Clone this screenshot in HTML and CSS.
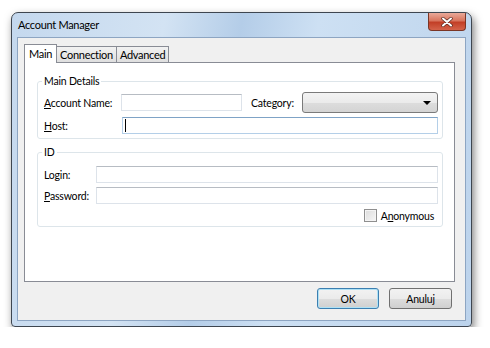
FILE: index.html
```html
<!DOCTYPE html>
<html lang="en">
<head>
  <meta charset="UTF-8">
  <title>Account Manager</title>
  <link rel="stylesheet" href="styles.css">
</head>
<body>

  <div class="window">
    <div class="titlebar">
      <span class="title">Account Manager</span>
      <button class="close-btn" aria-label="Close">
        <svg width="12" height="10" viewBox="0 0 12 10">
          <path d="M2 1.5 L10 8.5 M10 1.5 L2 8.5" stroke="#5a2a20" stroke-width="3.4" stroke-linecap="round"/>
          <path d="M2 1.5 L10 8.5 M10 1.5 L2 8.5" stroke="#fff" stroke-width="2" stroke-linecap="round"/>
        </svg>
      </button>
    </div>

    <div class="client">
      <div class="tabs">
        <div class="tab active">Main</div>
        <div class="tab">Connection</div>
        <div class="tab">Advanced</div>
      </div>

      <div class="tab-panel">
        <fieldset class="group">
          <legend>Main Details</legend>
          <div class="main-grid">
            <label><u>A</u>ccount Name:</label>
            <input type="text" class="textbox">
            <span></span>
            <label>Category:</label>
            <div class="combo"></div>

            <label><u>H</u>ost:</label>
            <div class="host-wrap">
              <input type="text" class="textbox focused">
              <span class="caret"></span>
            </div>
          </div>
        </fieldset>

        <fieldset class="group group-id">
          <legend>ID</legend>
          <div class="id-grid">
            <label>Lo<u>g</u>in:</label>
            <input type="text" class="textbox">
            <label><u>P</u>assword:</label>
            <input type="password" class="textbox">
          </div>
          <div class="check-row">
            <input type="checkbox" class="check">
            <label>A<u>n</u>onymous</label>
          </div>
        </fieldset>
      </div>

      <div class="buttons">
        <button class="btn default">OK</button>
        <button class="btn">Anuluj</button>
      </div>
    </div>
  </div>

</body>
</html>
```

FILE: styles.css
```css
body {
  margin: 0;
  background: #fff;
  font-family: Lato, "Liberation Sans", sans-serif;
  font-size: 10.5px;
  letter-spacing: -0.2px;
  color: #000;
}

u {
  text-underline-offset: 1px;
}

.window {
  margin: 12px 0 0 11px;
  width: 461px;
  height: 315px;
  box-sizing: border-box;
  border: 1px solid #3e4650;
  border-radius: 7px 7px 4px 4px;
  background: linear-gradient(100deg, #c4d8ee 0%, #d3e3f3 30%, #b4cde8 45%, #cde0f3 60%, #bcd3ec 100%);
  box-shadow: 2px 4px 9px rgba(0, 0, 0, 0.5);
  overflow: hidden;
}

.titlebar {
  height: 24px;
  display: flex;
  align-items: flex-start;
  justify-content: space-between;
  padding: 0 5px 0 6px;
}

.title {
  line-height: 24px;
  font-size: 11px;
  letter-spacing: -0.3px;
}

.close-btn {
  width: 38px;
  height: 18px;
  padding: 0;
  border: 1px solid #7a3525;
  border-top: none;
  border-radius: 0 0 4px 4px;
  background: linear-gradient(#e9a999 0%, #d8755e 45%, #c23f27 55%, #d4634a 100%);
  display: flex;
  align-items: center;
  justify-content: center;
}

.client {
  margin: 0 5px;
  width: 449px;
  height: 284px;
  box-sizing: border-box;
  border: 1px solid #8da5c2;
  background: #f0f0f0;
  padding: 6px 0 0 6px;
}

/* tabs */
.tabs {
  display: flex;
  align-items: flex-end;
  height: 18px;
}

.tab {
  height: 16px;
  box-sizing: border-box;
  border: 1px solid #898c95;
  border-bottom: none;
  background: linear-gradient(#f2f2f2, #dfdfdf);
  padding: 0 3px;
  line-height: 15px;
  font-size: 11px;
  letter-spacing: -0.3px;
  margin-left: -1px;
}

.tab.active {
  height: 19px;
  margin-bottom: -1px;
  margin-left: 0;
  background: #fff;
  position: relative;
  z-index: 1;
  padding: 0 4px;
  line-height: 18px;
}

.tab-panel {
  width: 431px;
  height: 220px;
  box-sizing: border-box;
  border: 1px solid #898c95;
  background: #fff;
  padding: 11px 0 0 12px;
}

/* groups */
.group {
  margin: 0;
  width: 406px;
  box-sizing: border-box;
  padding: 0 4px 4px 6px;
  border: 1px solid #dde5ea;
  border-radius: 3px;
  min-width: 0;
}

.group legend {
  padding: 0 2px;
  margin-left: -2px;
  line-height: 15px;
}

.group-id {
  margin-top: 6px;
}

.main-grid {
  padding-top: 3px;
  display: grid;
  grid-template-columns: 77px 121px 9px 51px 136px;
  grid-template-rows: 21px 17px;
  row-gap: 4px;
  align-items: center;
}

.id-grid {
  padding-top: 6px;
  display: grid;
  grid-template-columns: 52px 1fr;
  grid-template-rows: 17px 17px;
  row-gap: 4px;
  align-items: center;
}

.textbox {
  display: block;
  width: 100%;
  height: 17px;
  box-sizing: border-box;
  margin: 0;
  border: 1px solid #dde3ea;
  border-top-color: #b7bcc3;
  background: #fff;
  outline: none;
}

.host-wrap {
  grid-column: 2 / 6;
  margin-left: 1px;
  position: relative;
}

.textbox.focused {
  border-color: #b4cfe8;
  border-top-color: #7fa3c6;
}

.caret {
  position: absolute;
  left: 3px;
  top: 2px;
  width: 1px;
  height: 13px;
  background: #000;
}

.combo {
  height: 21px;
  box-sizing: border-box;
  border: 1px solid #7a7a7a;
  border-radius: 3px;
  background: linear-gradient(#f3f3f3 0%, #ebebeb 50%, #dddddd 51%, #d4d4d4 100%);
  position: relative;
}

.combo::after {
  content: "";
  position: absolute;
  right: 6px;
  top: 8px;
  border-left: 4px solid transparent;
  border-right: 4px solid transparent;
  border-top: 4px solid #000;
}

.check-row {
  margin-top: 5px;
  display: flex;
  justify-content: flex-end;
  align-items: center;
  gap: 4px;
  padding-right: 4px;
  height: 13px;
}

.check {
  appearance: none;
  margin: 0;
  width: 13px;
  height: 13px;
  box-sizing: border-box;
  border: 1px solid #8f8f8f;
  background: linear-gradient(135deg, #dcdcdc, #f6f6f6);
  box-shadow: inset 0 0 0 1px #f4f4f4;
}

/* buttons */
.buttons {
  display: flex;
  justify-content: flex-end;
  gap: 10px;
  padding-right: 13px;
  margin-top: 6px;
}

.btn {
  width: 63px;
  height: 21px;
  box-sizing: border-box;
  border: 1px solid #707070;
  border-radius: 3px;
  background: linear-gradient(#f2f2f2 0%, #ebebeb 50%, #dddddd 51%, #cfcfcf 100%);
  font-family: inherit;
  font-size: 10.5px;
  letter-spacing: -0.2px;
  color: #000;
  padding: 0;
}

.btn.default {
  width: 62px;
  border-color: #3c7fb1;
  box-shadow: inset 0 0 0 1px #aee1f5;
}
```
